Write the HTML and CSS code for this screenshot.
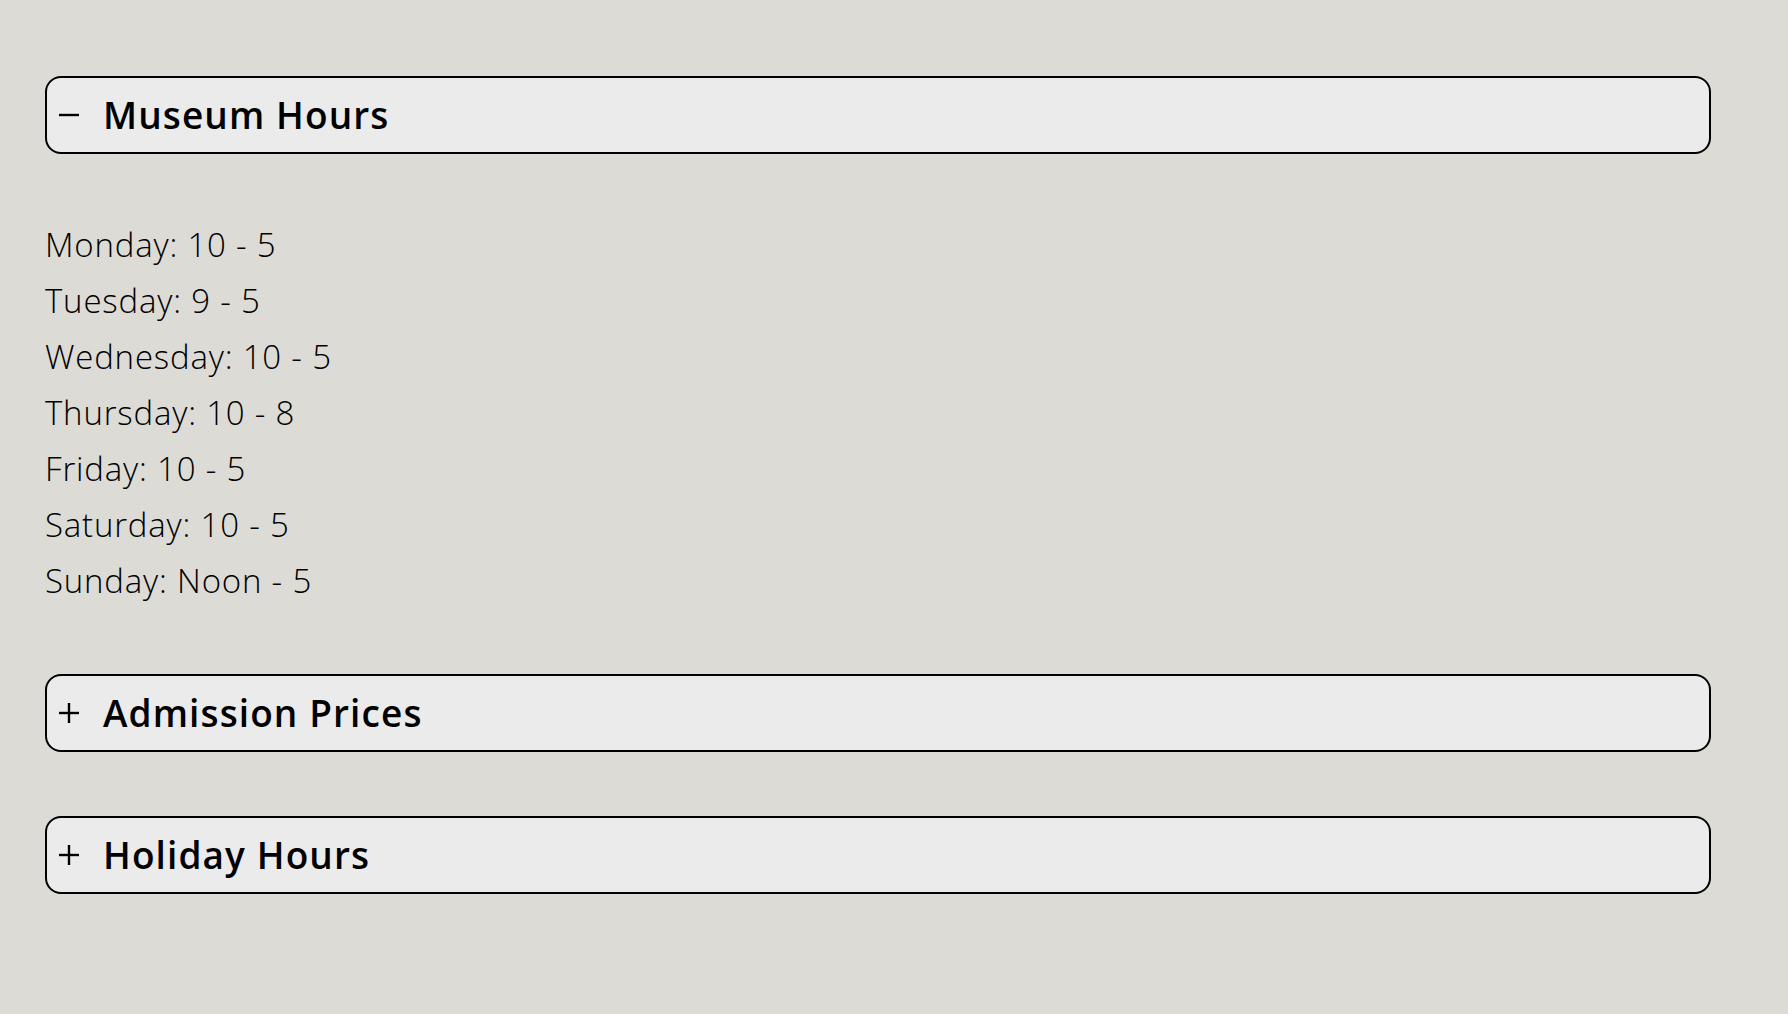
FILE: index.html
```html
<!DOCTYPE html>
<html>
<head>
  <meta charset="UTF-8">
  <meta name="viewport" content="width=device-width, initial-scale=1.0">
  <title>Museum Information</title>
  <link rel="stylesheet" href="styles.css">
</head>
<body>
  <div class="accordion">
    <div class="panel open">
      <button class="panel-header">
        <span class="icon"><svg viewBox="0 0 22 22" width="22" height="22"><path d="M1 11h20"/><path class="vert" d="M11 1v20"/></svg></span>
        <span class="title">Museum Hours</span>
      </button>
      <div class="panel-body">
        <p>Monday: 10 - 5</p>
        <p>Tuesday: 9 - 5</p>
        <p>Wednesday: 10 - 5</p>
        <p>Thursday: 10 - 8</p>
        <p>Friday: 10 - 5</p>
        <p>Saturday: 10 - 5</p>
        <p>Sunday: Noon - 5</p>
      </div>
    </div>

    <div class="panel">
      <button class="panel-header">
        <span class="icon"><svg viewBox="0 0 22 22" width="22" height="22"><path d="M1 11h20"/><path class="vert" d="M11 1v20"/></svg></span>
        <span class="title">Admission Prices</span>
      </button>
      <div class="panel-body">
        <p>Adults: $20</p>
        <p>Seniors: $15</p>
        <p>Students: $12</p>
        <p>Children under 12: Free</p>
      </div>
    </div>

    <div class="panel">
      <button class="panel-header">
        <span class="icon"><svg viewBox="0 0 22 22" width="22" height="22"><path d="M1 11h20"/><path class="vert" d="M11 1v20"/></svg></span>
        <span class="title">Holiday Hours</span>
      </button>
      <div class="panel-body">
        <p>Closed on Thanksgiving, Christmas and New Year's Day</p>
      </div>
    </div>
  </div>

  <script>
    document.querySelectorAll('.panel-header').forEach(btn => {
      btn.addEventListener('click', () => {
        btn.parentElement.classList.toggle('open');
      });
    });
  </script>
</body>
</html>
```

FILE: styles.css
```css
body {
  margin: 0;
  background: #dcdbd6;
  font-family: 'Open Sans', 'Noto Sans', sans-serif;
  color: #000;
}
.accordion {
  padding: 76px 77px 40px 45px;
}
.panel {
  margin-bottom: 64px;
}
.panel-header {
  display: flex;
  align-items: center;
  width: 100%;
  padding: 8px 10px 8px 11px;
  background: #ebebeb;
  border: 2px solid #000;
  border-radius: 16px;
  font-family: inherit;
  font-size: 37px;
  font-weight: 600;
  line-height: 58px;
  color: #000;
  text-align: left;
  cursor: pointer;
}
.icon {
  display: flex;
  align-items: center;
  width: 45px;
  flex-shrink: 0;
}
.icon svg {
  stroke: #000;
  stroke-width: 2.4;
  fill: none;
}
.panel.open .icon .vert {
  display: none;
}
.title {
  letter-spacing: 1.1px;
}
.panel-body {
  display: none;
  padding: 63px 0 1px;
}
.panel.open .panel-body {
  display: block;
}
.panel-body p {
  margin: 0;
  font-size: 33px;
  font-weight: 300;
  line-height: 56px;
  letter-spacing: 0.8px;
}
```
